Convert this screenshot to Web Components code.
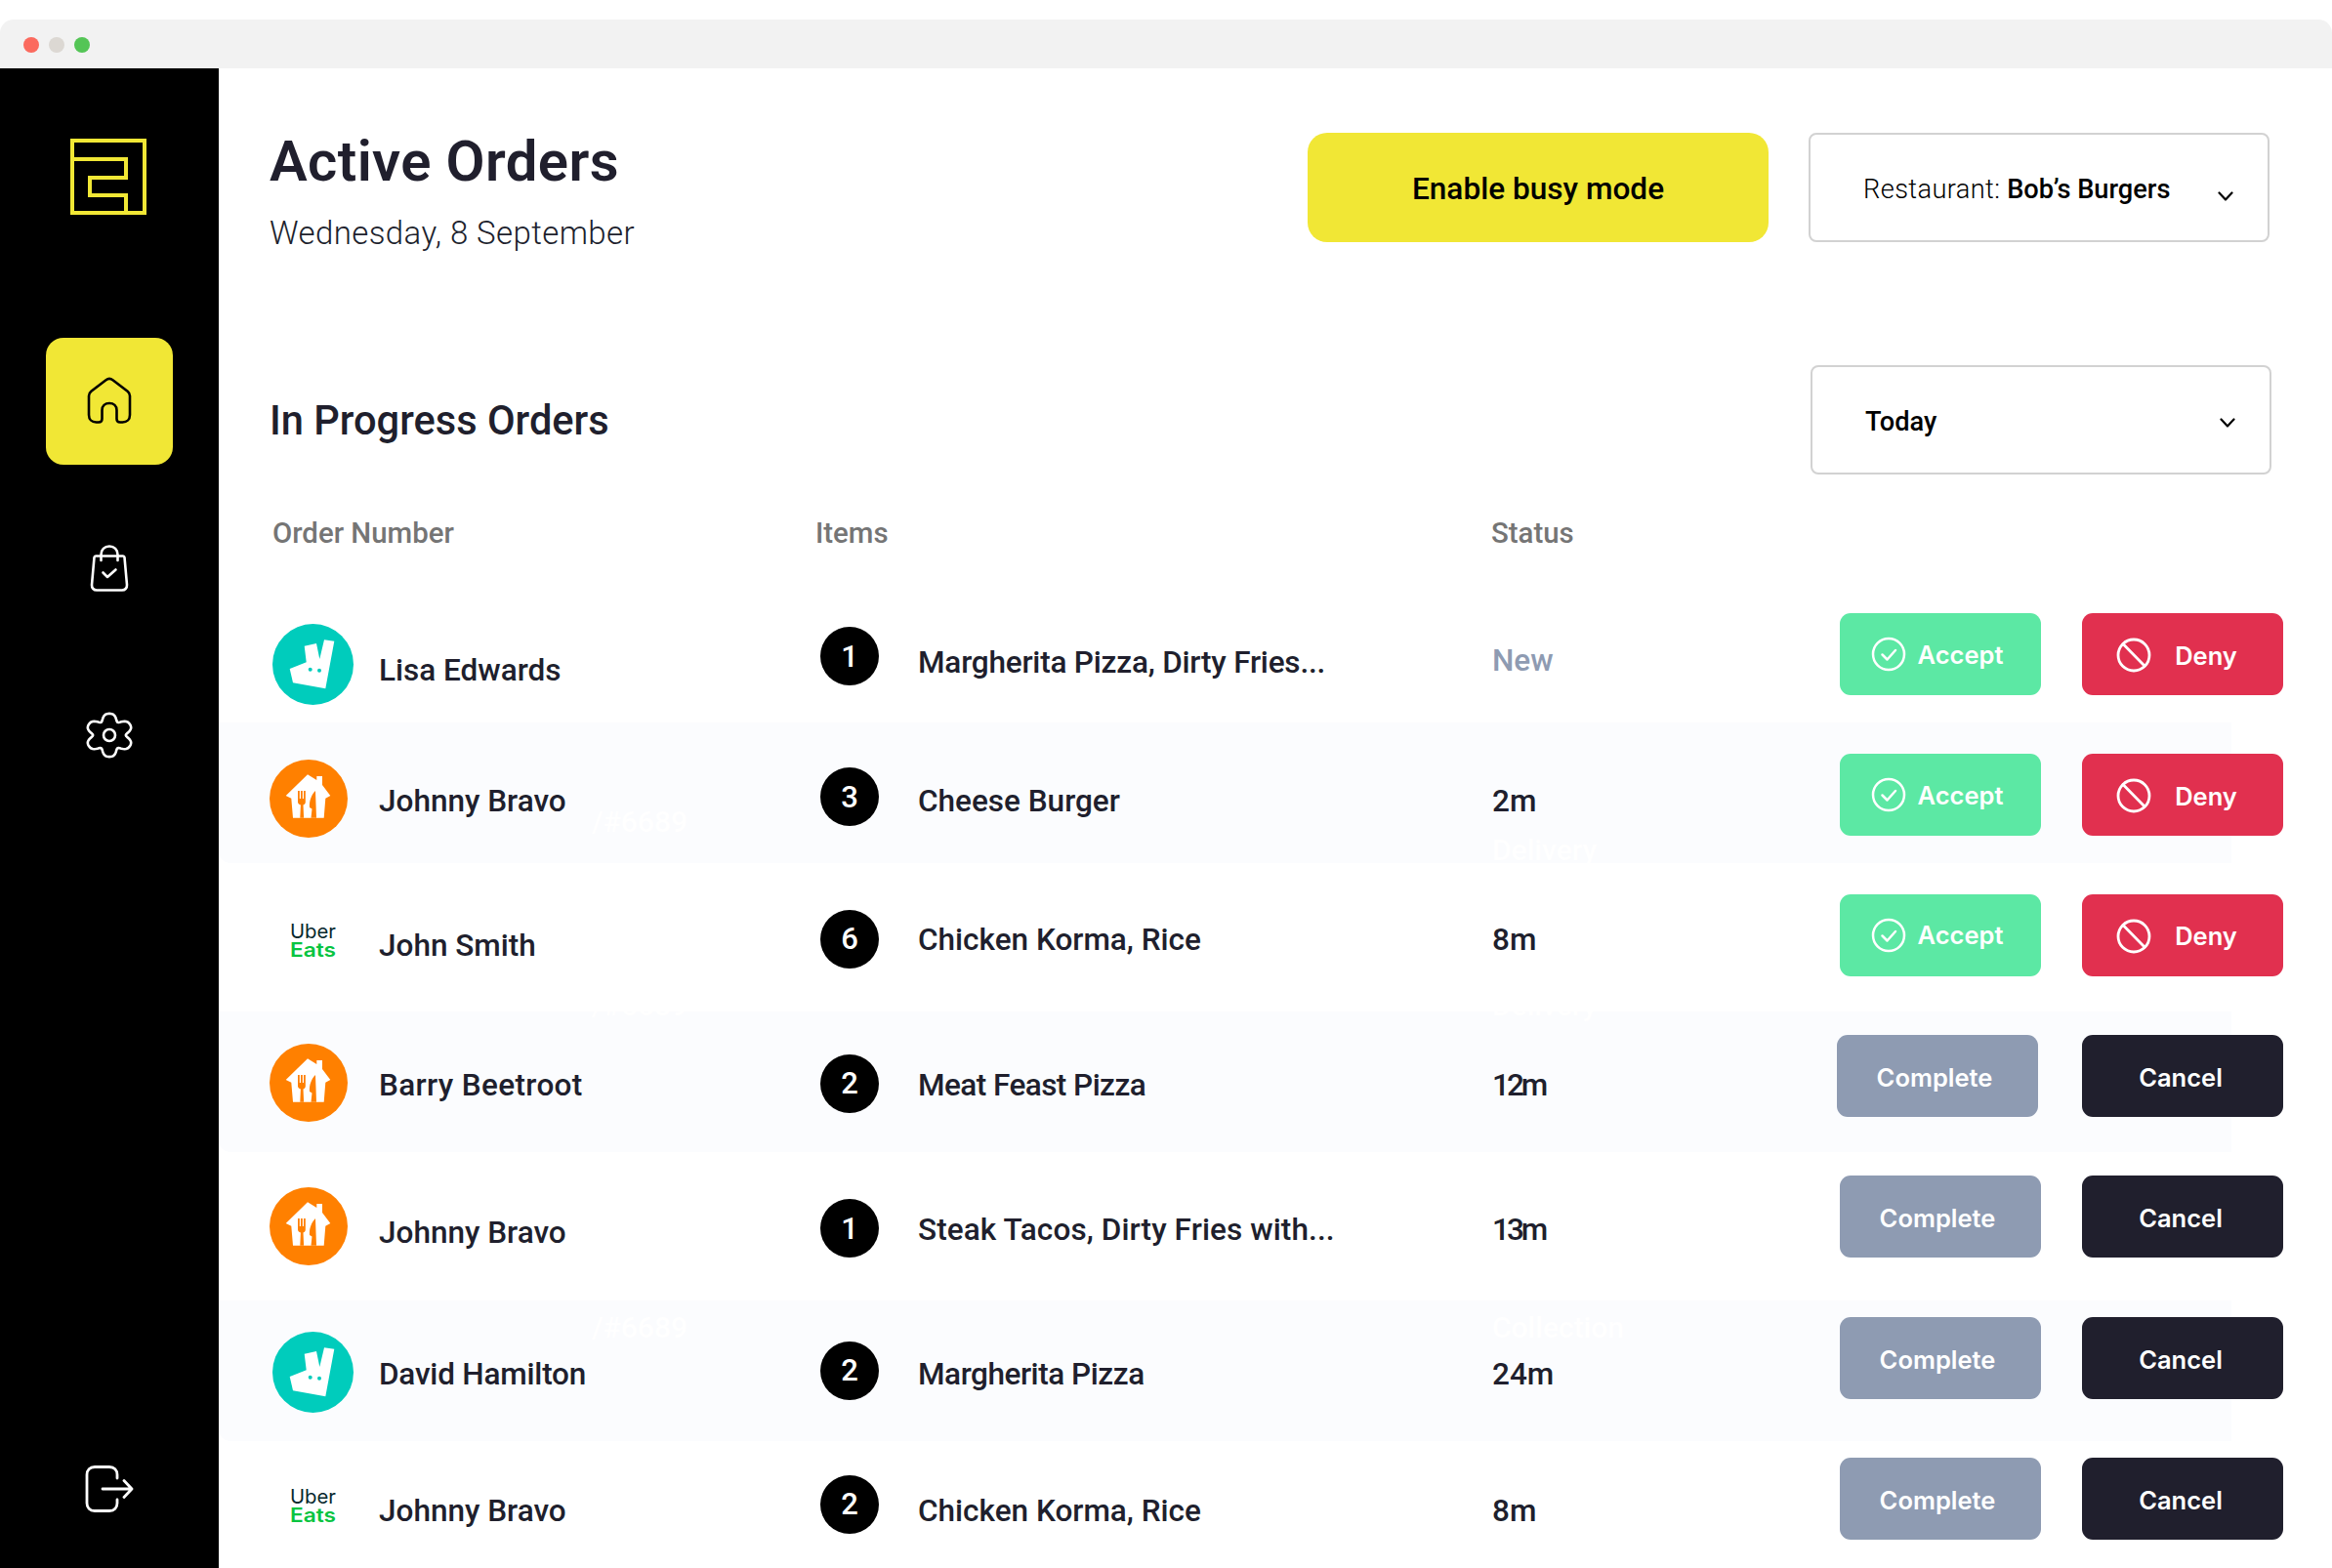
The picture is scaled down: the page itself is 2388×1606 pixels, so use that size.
<!DOCTYPE html>
<html lang="en">
<head>
<meta charset="utf-8">
<title>Active Orders</title>
<style>
    html, body { margin: 0; padding: 0; background: #fff; }
    body { width: 2388px; height: 1606px; overflow: hidden; font-family: Roboto, "Liberation Sans", sans-serif; color: #201f2d; }
</style>
</head>
<body>
<app-shell>
    <side-bar slot="side"></side-bar>
    <page-header></page-header>
    <section-head></section-head>
    <order-table>
        <order-row platform="deliveroo" name="Lisa Edwards" count="1" items="Margherita Pizza, Dirty Fries..." fit="-0.2" status="New" kind="new" y="84 89 76 81 79 32"></order-row>
        <order-row platform="justeat" name="Johnny Bravo" count="3" items="Cheese Burger" status="2m" kind="new" y="78 79 76 79 79 32" stripe="0" ghost-id="/#6689" ghost-type="Delivery" ghost-y="85 114"></order-row>
        <order-row platform="uber" name="John Smith" count="6" items="Chicken Korma, Rice" status="8m" kind="new" y="77 82 77 76 76 31" ghost-id="/#6689" ghost-type="Delivery" ghost-y="128 128"></order-row>
        <order-row platform="justeat" name="Barry Beetroot" name-fit="0.35" count="2" items="Meat Feast Pizza" fit="-0.55" status="12m" status-fit="-3" kind="active" shift="-3" y="80 81 81 81 81 31" stripe="7"></order-row>
        <order-row platform="justeat" name="Johnny Bravo" count="1" items="Steak Tacos, Dirty Fries with..." fit="0.1" status="13m" status-fit="-3" kind="active" y="83 88 85 85 85 31"></order-row>
        <order-row platform="deliveroo" name="David Hamilton" name-fit="-0.2" count="2" items="Margherita Pizza" fit="-0.45" status="24m" kind="active" y="88 88 86 88 88 31" stripe="14.3" ghost-id="/#6689" ghost-type="Collection" ghost-y="25 25"></order-row>
        <order-row platform="uber" name="Johnny Bravo" count="2" items="Chicken Korma, Rice" status="8m" kind="active" y="79 84 79 84 84 31"></order-row>
    </order-table>
</app-shell>

<script>
class AppShell extends HTMLElement {
    constructor() {
        super();
        this.attachShadow({ mode: 'open' });
        this.shadowRoot.innerHTML = `
            <style>
                :host { display: flex; flex-direction: column; width: 2388px; height: 1606px; padding-top: 20px; box-sizing: border-box; }
                .chrome { flex: none; height: 50px; background: #f2f2f2; border-radius: 14px 14px 0 0; display: flex; align-items: center; gap: 10px; padding: 2px 0 0 24px; box-sizing: border-box; }
                .dot { width: 16px; height: 16px; border-radius: 50%; }
                .body { flex: 1; display: flex; min-height: 0; }
                .main { flex: 1; min-width: 0; padding: 66px 64px 0 52px; overflow: hidden; }
            </style>
            <div class="chrome">
                <span class="dot" style="background:#fb6a5e"></span>
                <span class="dot" style="background:#dcd8d3"></span>
                <span class="dot" style="background:#54c556"></span>
            </div>
            <div class="body">
                <slot name="side"></slot>
                <div class="main"><slot></slot></div>
            </div>
        `;
    }
}

// six rounded lobes, top lobe pointing up
function gearPath() {
    const pts = [];
    for (let i = 0; i < 120; i++) {
        const t = i / 120 * Math.PI * 2;
        const r = 19.4 + 3.4 * Math.cos(6 * t) - 0.7 * Math.cos(12 * t);
        pts.push(`${(24 + 1.1 * r * Math.sin(t)).toFixed(2)} ${(24 - r * Math.cos(t)).toFixed(2)}`);
    }
    return 'M' + pts.join('L') + 'Z';
}

class SideBar extends HTMLElement {
    constructor() {
        super();
        this.attachShadow({ mode: 'open' });
        this.shadowRoot.innerHTML = `
            <style>
                :host { display: flex; flex-direction: column; align-items: center; flex: none; width: 224px; height: 100%; background: #000; padding: 72px 0 57px; box-sizing: border-box; }
                svg { display: block; fill: none; stroke-linecap: round; stroke-linejoin: round; }
                .logo { margin-bottom: 126px; margin-right: 2px; }
                .nav { display: flex; flex-direction: column; gap: 41px; }
                .item { width: 130px; height: 130px; border-radius: 18px; display: flex; align-items: center; justify-content: center; color: #fff; }
                .item.on { background: #f1e735; color: #000; }
                .gear { margin-right: 1px; }
                .exit { margin-top: auto; margin-left: -1px; color: #fff; }
            </style>
            <svg class="logo" width="78" height="78" viewBox="0 0 78 78" stroke="#f1e735" stroke-width="4" style="stroke-linecap:butt;stroke-linejoin:miter">
                <path d="M2 2H76V76H2Z"/>
                <path d="M2 21H57V40H20V58H57V76"/>
            </svg>
            <div class="nav">
                <div class="item on">
                    <svg width="48" height="50" viewBox="0 0 48 50" stroke="currentColor" stroke-width="2.6">
                        <path d="M3 19.5c0-2 .9-3.6 2.4-4.8L20.5 3.2c2.1-1.6 4.900-1.600 7 0l15.100 11.500c1.500 1.200 2.400 2.800 2.400 4.800V39c0 4.500-3 7.500-7.500 7.500H35c-2.500 0-3.500-1.500-3.500-3.500v-9c0-4-3-7-7.500-7s-7.500 3-7.500 7v9c0 2-1 3.500-3.500 3.500h-2.500C6 46.500 3 43.500 3 39Z"/>
                    </svg>
                </div>
                <div class="item">
                    <svg width="40" height="48" viewBox="0 0 40 48" stroke="currentColor" stroke-width="2.600">
                        <path d="M6 11.500H34c.8 0 1.400.6 1.500 1.400L38 41c.2 3.300-2 5.500-5 5.500H7c-3 0-5.200-2.200-5-5.500L4.500 12.900c.1-.8.700-1.400 1.500-1.400Z"/>
                        <path d="M11.500 16V10C11.500 5 15 1.500 20 1.500S28.500 5 28.500 10v6"/>
                        <path d="M13.500 28.500 18 33l8.500-7.500"/>
                    </svg>
                </div>
                <div class="item">
                    <svg class="gear" width="48" height="48" viewBox="0 0 48 48" stroke="currentColor" stroke-width="2.600">
                        <circle cx="24" cy="24" r="6"/>
                        <path d="${gearPath()}"/>
                    </svg>
                </div>
            </div>
            <div class="exit">
                <svg width="50" height="48" viewBox="0 0 50 48" stroke="currentColor" stroke-width="2.800">
                    <path d="M33 13V9.500C33 4.500 30 1.500 25 1.500H10C5 1.500 2 4.500 2 9.500V38.500C2 43.500 5 46.500 10 46.500H25C30 46.500 33 43.500 33 38.500V35"/>
                    <path d="M18 24H47.500M40 15.500 48 24l-8 8.500"/>
                </svg>
            </div>
        `;
    }
}

class PageHeader extends HTMLElement {
    constructor() {
        super();
        this.attachShadow({ mode: 'open' });
        this.shadowRoot.innerHTML = `
            <style>
                :host { display: flex; align-items: flex-start; height: 112px; font-family: Roboto, sans-serif; color: #201f2d; }
                .titles { flex: 1; }
                h1 { margin: 1px 0 0; font-size: 58px; line-height: 56px; font-weight: 600; letter-spacing: 0.4px; }
                p { margin: 26px 0 0; font-size: 33px; line-height: 40px; font-weight: 300; letter-spacing: 0.4px; }
                .busy { width: 472px; height: 112px; padding-top: 3px; box-sizing: border-box; border-radius: 20px; background: #f1e735; color: #000; display: flex; align-items: center; justify-content: center; font-size: 31.600px; font-weight: 500; margin-right: 41px; }
            </style>
            <div class="titles">
                <h1>Active Orders</h1>
                <p>Wednesday, 8 September</p>
            </div>
            <div class="busy">Enable busy mode</div>
            <select-box chevron="18"><span style="font-weight:300;letter-spacing:0.4px">Restaurant:</span> Bob’s Burgers</select-box>
        `;
    }
}

class SelectBox extends HTMLElement {
    constructor() {
        super();
        this.attachShadow({ mode: 'open' });
    }

    connectedCallback() {
        this.shadowRoot.innerHTML = `
            <style>
                :host { display: flex; align-items: center; justify-content: space-between; width: 472px; height: 112px; box-sizing: border-box; border: 2px solid #d2d2d2; border-radius: 8px; padding: 0 35px 0 54px; font-family: Roboto, sans-serif; font-size: 27.200px; font-weight: 500; color: #000; background: #fff; }
                .label { margin-top: 4px; white-space: nowrap; }
                svg { display: block; flex: none; }
            </style>
            <span class="label"><slot></slot></span>
            <svg style="margin-top:${this.getAttribute('chevron') || 0}px" width="16" height="10" viewBox="0 0 16 10" fill="none" stroke="#000" stroke-width="2.200" stroke-linecap="round" stroke-linejoin="round"><path d="M1.500 1.500 8 8.500l6.500-7"/></svg>
        `;
    }
}

class SectionHead extends HTMLElement {
    constructor() {
        super();
        this.attachShadow({ mode: 'open' });
        this.shadowRoot.innerHTML = `
            <style>
                :host { display: flex; align-items: center; justify-content: space-between; margin: 126px -2px 0 0; font-family: Roboto, sans-serif; }
                h2 { margin: 2px 0 0; font-size: 41.600px; line-height: 50px; font-weight: 500; color: #201f2d; }
                select-box { margin-left: auto; }
            </style>
            <h2>In Progress Orders</h2>
            <select-box chevron="6">Today</select-box>
        `;
    }
}

class OrderTable extends HTMLElement {
    constructor() {
        super();
        this.attachShadow({ mode: 'open' });
        this.shadowRoot.innerHTML = `
            <style>
                :host { display: block; margin: 0 -64px 0 -52px; font-family: Roboto, sans-serif; }
                .cols { display: grid; grid-template-columns: 556px 692px 1fr; padding: 46px 0 36px 55px; font-size: 29.400px; line-height: 28px; font-weight: 500; color: #757575; }
            </style>
            <div class="cols"><span>Order Number</span><span>Items</span><span>Status</span></div>
            <slot></slot>
        `;
    }
}

const platformLogos = {
    deliveroo: `
        <svg width="84" height="84" viewBox="0 0 84 84" style="display:block;margin-left:3px">
            <circle cx="41.500" cy="41.500" r="41.500" fill="#00ccbc"/>
            <path fill="#fff" d="M32.700 22.700 45 20l3.300 16L53 16.300l10.300 1.400-9 48.600L21 60.300 17.700 46l17-6.700Z"/>
            <circle cx="38.700" cy="46.700" r="2" fill="#00ccbc"/>
            <circle cx="48" cy="47.700" r="2" fill="#00ccbc"/>
        </svg>`,
    justeat: `
        <svg width="80" height="80" viewBox="0 0 80 80" style="display:block">
            <circle cx="40" cy="40" r="40" fill="#ff8000"/>
            <path fill="#fff" d="M39 15.300 48.300 21V17H54v9l8.300 11-5 2.700-1.600 20H24l-1.700-20-5.600-2.700Z"/>
            <path fill="#ff8000" d="M29 32h1.800v8H32v-8h1.800v8H35v-8h1.800v11.500c0 1.500-1 2.500-2.300 3l.6 13.200h-3.800l.6-13.200c-1.400-.5-2.900-1.500-2.900-3Z"/>
            <path fill="#ff8000" d="M47 32c-4 4-6.500 10-6 17l2.500 1.500-1 9.200H48Z"/>
        </svg>`,
    uber: `
        <svg width="48" height="36" viewBox="0 0 48 36" style="display:block;margin-left:21px;overflow:visible;font-family:Inter,sans-serif;font-size:20px">
            <text x="0" y="17" textLength="47" lengthAdjust="spacingAndGlyphs" fill="#06272d" font-weight="400">Uber</text>
            <text x="0" y="36" textLength="47" lengthAdjust="spacingAndGlyphs" fill="#08c440" font-weight="600">Eats</text>
        </svg>`
};

class OrderRow extends HTMLElement {
    constructor() {
        super();
        this.attachShadow({ mode: 'open' });
    }

    connectedCallback() {
        this.render();
    }

    render() {
        const a = (name, fallback = '') => this.getAttribute(name) ?? fallback;
        const [logoY, nameY, badgeY, itemY, statusY, btnY] = a('y').split(' ').map(Number);
        const logoH = a('platform') === 'deliveroo' ? 83 : a('platform') === 'justeat' ? 80 : 36;
        const line = 40;
        const textTop = y => y - line / 2 + 2;
        const stripe = this.hasAttribute('stripe')
            ? `<div class="stripe" style="top:${a('stripe')}px"></div>` : '';
        const [ghostA, ghostB] = a('ghost-y', '0 0').split(' ');
        const ghost = this.hasAttribute('ghost-id') ? `
            <span class="ghost" style="left:382px;top:${ghostA}px">${a('ghost-id')}</span>
            <span class="ghost" style="left:1304px;top:${ghostB}px">${a('ghost-type')}</span>` : '';
        const isNew = a('kind') === 'new';
        const primary = isNew
            ? `<action-button tone="accept">Accept</action-button>`
            : `<action-button tone="complete">Complete</action-button>`;
        const secondary = isNew
            ? `<action-button tone="deny">Deny</action-button>`
            : `<action-button tone="cancel">Cancel</action-button>`;
        const statusColor = a('status') === 'New' ? '#8e9bb2' : '#201f2d';
        this.shadowRoot.innerHTML = `
            <style>
                :host { display: block; position: relative; height: 144.33px; font-family: Roboto, sans-serif; font-size: 31.500px; font-weight: 500; color: #201f2d; }
                .stripe { position: absolute; left: 0; width: 2061px; height: 144px; background: #fbfcfe; border-radius: 0 0 0 12px; }
                .ghost { position: absolute; z-index: 1; font-size: 30px; color: #fff; font-weight: 500; line-height: 34px; }
                .row { position: relative; z-index: 2; display: grid; height: 100%; grid-template-columns: 112px 453px 99px 588px 356px 248px 1fr; padding-left: 52px; align-items: start; }
                .cell { line-height: ${line}px; white-space: nowrap; }
                .badge { width: 60px; height: 60px; margin-left: -1px; border-radius: 50%; background: #000; color: #fff; display: flex; align-items: center; justify-content: center; font-size: 31px; }
            </style>
            ${stripe}
            ${ghost}
            <div class="row">
                <div style="margin-top:${logoY - logoH / 2}px">${platformLogos[a('platform')]}</div>
                <div class="cell" style="margin-top:${textTop(nameY)}px;letter-spacing:${a('name-fit', '0')}px">${a('name')}</div>
                <div class="badge" style="margin-top:${badgeY - 30}px">${a('count')}</div>
                <div class="cell" style="margin-top:${textTop(itemY)}px;letter-spacing:${a('fit', '0')}px">${a('items')}</div>
                <div class="cell" style="margin-top:${textTop(statusY)}px;color:${statusColor};letter-spacing:${a('status-fit', '0')}px">${a('status')}</div>
                <div style="margin-top:${btnY}px;margin-left:${a('shift', '0')}px">${primary}</div>
                <div style="margin-top:${btnY}px">${secondary}</div>
            </div>
        `;
    }
}

const buttonIcons = {
    accept: `<svg width="36" height="36" viewBox="0 0 36 36" fill="none" stroke="#fff" stroke-width="2.500" stroke-linecap="round" stroke-linejoin="round"><circle cx="18" cy="18" r="16"/><path d="M11.500 18.500l5 5 8.500-9.500"/></svg>`,
    deny: `<svg width="36" height="36" viewBox="0 0 36 36" fill="none" stroke="#fff" stroke-width="2.800" stroke-linecap="round"><circle cx="18" cy="18" r="16"/><path d="M7 6.500 29 29"/></svg>`
};

class ActionButton extends HTMLElement {
    constructor() {
        super();
        this.attachShadow({ mode: 'open' });
    }

    connectedCallback() {
        const tone = this.getAttribute('tone');
        const icon = buttonIcons[tone] || '';
        this.shadowRoot.innerHTML = `
            <style>
                :host { display: flex; align-items: center; justify-content: center; width: 206px; height: 84px; border-radius: 11px; color: #fff; font-family: Inter, sans-serif; font-size: 25.500px; font-weight: 600; box-sizing: border-box; }
                :host([tone="accept"]) { background: #5ce8a4; gap: 12px; padding-right: 7px; }
                :host([tone="deny"]) { background: #e1304f; gap: 24px; padding: 2px 12px 0 0; }
                :host([tone="complete"]) { background: #8e9bb2; padding: 3px 6px 0 0; }
                :host([tone="cancel"]) { background: #201f2d; padding: 3px 4px 0 0; }
                svg { display: block; flex: none; }
            </style>
            ${icon}<slot></slot>
        `;
    }
}

customElements.define('app-shell', AppShell);
customElements.define('side-bar', SideBar);
customElements.define('select-box', SelectBox);
customElements.define('page-header', PageHeader);
customElements.define('section-head', SectionHead);
customElements.define('order-table', OrderTable);
customElements.define('action-button', ActionButton);
customElements.define('order-row', OrderRow);
</script>
</body>
</html>
